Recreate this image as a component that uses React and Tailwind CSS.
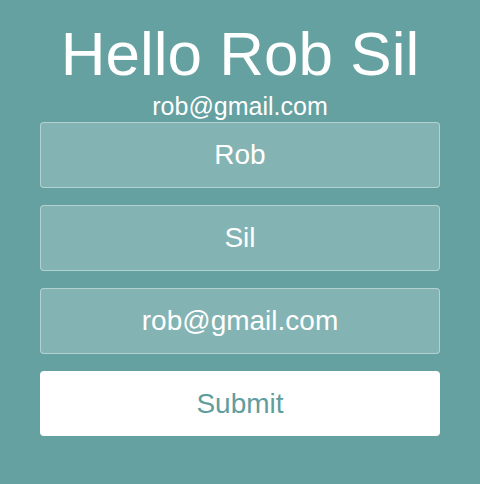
import React, { useState } from 'react';

const App = () => {
  const [form, setForm] = useState({ first: 'Rob', last: 'Sil', email: 'rob@gmail.com' });

  const handleChange = (e) => setForm({ ...form, [e.target.name]: e.target.value });

  return (
    <div className="w-[480px] h-[484px] bg-[#64a1a0] text-white pt-[23px] font-['Liberation_Sans',Arial,sans-serif]">
      <h1 className="text-center text-[62px] leading-[62px] font-normal">Hello {form.first} {form.last}</h1>
      <p className="mt-[9px] text-center text-[25px] leading-[24px]">{form.email}</p>

      <form onSubmit={(e) => e.preventDefault()} className="mt-[4px] w-[400px] mx-auto flex flex-col gap-[17px]">
        <input name="first" value={form.first} onChange={handleChange} className="h-[66px] w-full rounded border border-white/40 bg-white/20 text-center text-[28px] text-white outline-none" />
        <input name="last" value={form.last} onChange={handleChange} className="h-[66px] w-full rounded border border-white/40 bg-white/20 text-center text-[28px] text-white outline-none" />
        <input name="email" value={form.email} onChange={handleChange} className="h-[66px] w-full rounded border border-white/40 bg-white/20 text-center text-[28px] text-white outline-none" />
        <button type="submit" className="h-[65px] w-full rounded bg-white text-[28px] text-[#5f9e9d]">Submit</button>
      </form>
    </div>
  );
};

export default App;
